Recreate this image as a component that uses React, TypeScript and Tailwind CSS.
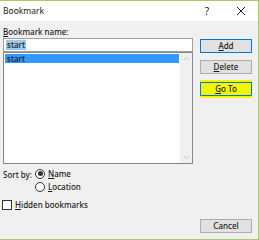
import React from "react";

function Btn({
  label,
  accessKey,
  focused,
  highlight,
}: {
  label: string;
  accessKey?: number;
  focused?: boolean;
  highlight?: boolean;
}) {
  let content: React.ReactNode = label;
  if (accessKey !== undefined) {
    content = (
      <>
        {label.slice(0, accessKey)}
        <span className="underline">{label.charAt(accessKey)}</span>
        {label.slice(accessKey + 1)}
      </>
    );
  }
  return (
    <div
      className={`flex h-[14px] w-[52px] items-center justify-center border text-[8px] font-medium leading-none text-[#1b1b1b] ${
        focused ? "border-[#0078d7]" : "border-[#adadad]"
      } ${highlight ? "bg-[#f4f400]" : "bg-[#e1e1e1]"}`}
    >
      {content}
    </div>
  );
}

function Radio({ checked, label }: { checked?: boolean; label: React.ReactNode }) {
  return (
    <div className="flex h-[13px] items-center gap-[3px]">
      <div className="flex h-[10px] w-[10px] items-center justify-center rounded-full border border-[#333] bg-white">
        {checked && <div className="h-[5px] w-[5px] rounded-full bg-[#333]" />}
      </div>
      <span>{label}</span>
    </div>
  );
}

export default function App() {
  return (
    <div
      className="flex h-[240px] w-[259px] flex-col border-b border-r border-t border-[#a9c96a] bg-[#f0f0f0] text-[8px] font-medium text-[#1b1b1b]"
      style={{ fontFamily: '"Noto Sans", "Open Sans", sans-serif' }}
    >
      {/* title bar */}
      <div className="flex h-[20px] items-center bg-white pl-[3px]">
        <span className="text-[8.5px] font-normal">Bookmark</span>
        <span className="ml-auto mr-[27px] text-[10px] font-normal">?</span>
        <svg width="10" height="10" viewBox="0 0 10 10" className="mr-[12px]">
          <path d="M1 1 L9 9 M9 1 L1 9" stroke="#222" strokeWidth="1" />
        </svg>
      </div>

      <div className="flex flex-1 pl-[3px]">
        <div className="flex w-[190px] flex-col">
          <div className="mt-[6px] h-[10px] leading-[10px]">
            <span className="underline">B</span>ookmark name:
          </div>
          <div className="mt-[1px] flex h-[14px] items-center border border-[#a0a0a0] bg-white px-[2px]">
            <span className="bg-[#99c9ef] px-[1px] leading-[10px]">start</span>
          </div>
          <div className="flex h-[112px] border border-[#828790] bg-white">
            <div className="flex-1 p-[1px]">
              <div className="flex h-[9px] items-center bg-[#3399ff] pl-[2px] leading-none">start</div>
            </div>
            <div className="flex w-[12px] flex-col items-center justify-between bg-[#f0f0f0] py-[3px]">
              <svg width="7" height="5" viewBox="0 0 7 5">
                <path d="M1 4 L3.5 1.5 L6 4" stroke="#bdbdbd" fill="none" strokeWidth="1" />
              </svg>
              <svg width="7" height="5" viewBox="0 0 7 5">
                <path d="M1 1 L3.5 3.5 L6 1" stroke="#bdbdbd" fill="none" strokeWidth="1" />
              </svg>
            </div>
          </div>
          <div className="mt-[3px] flex">
            <span className="w-[32px] pt-[2px]">Sort by:</span>
            <div className="flex flex-col">
              <Radio
                checked
                label={
                  <>
                    <span className="underline">N</span>ame
                  </>
                }
              />
              <Radio
                label={
                  <>
                    <span className="underline">L</span>ocation
                  </>
                }
              />
            </div>
          </div>
          <div className="mt-[6px] -ml-[1px] flex items-center gap-[3px]">
            <div className="h-[10px] w-[10px] border border-[#333] bg-white" />
            <span>
              <span className="underline">H</span>idden bookmarks
            </span>
          </div>
        </div>

        <div className="ml-[7px] flex flex-col">
          <div className="mt-[18px]">
            <Btn label="Add" accessKey={0} focused />
          </div>
          <div className="mt-[7px]">
            <Btn label="Delete" accessKey={0} />
          </div>
          <div className="mt-[6px] bg-[#f4f400] py-[2px]">
            <Btn label="Go To" accessKey={0} focused highlight />
          </div>
          <div className="mt-auto mb-[6px]">
            <Btn label="Cancel" />
          </div>
        </div>
      </div>
    </div>
  );
}
